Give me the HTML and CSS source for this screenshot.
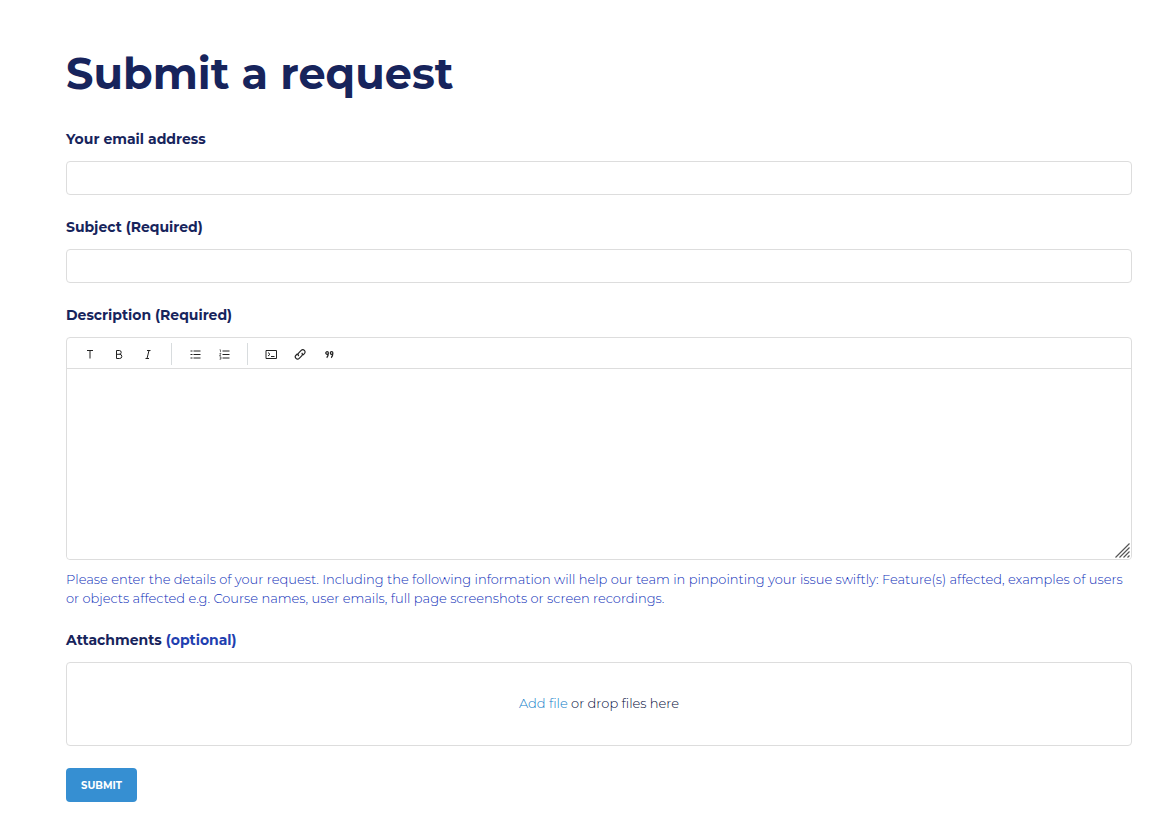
FILE: index.html
```
<!DOCTYPE html>
<html lang="en">
<head>
    <meta charset="UTF-8">
    <meta name="viewport" content="width=device-width, initial-scale=1.0">
    <title>Submit a request</title>
    <link rel="stylesheet" href="styles.css">
</head>
<body>
    <main class="container">
        <h1>Submit a request</h1>
        <form class="request-form">
            <div class="field">
                <label for="email">Your email address</label>
                <input class="text-input" type="email" id="email" name="email">
            </div>
            <div class="field">
                <label for="subject">Subject (Required)</label>
                <input class="text-input" type="text" id="subject" name="subject" required>
            </div>
            <div class="field">
                <label for="description">Description (Required)</label>
                <div class="editor">
                    <div class="toolbar">
                        <div class="tool-group">
                            <button type="button" aria-label="Text style">
                                <svg width="12" height="12" viewBox="0 0 12 12"><path d="M3 2.500h6M6 2.500v8"/></svg>
                            </button>
                            <button type="button" aria-label="Bold">
                                <svg width="12" height="12" viewBox="0 0 12 12"><path d="M3.500 2.500v8h3.200a2 2 0 0 0 0-4.200H3.500M3.500 2.500h2.800a1.900 1.900 0 0 1 0 3.800"/></svg>
                            </button>
                            <button type="button" aria-label="Italic">
                                <svg width="12" height="12" viewBox="0 0 12 12"><path d="M5 2.500h3.500M3.500 10.500H7M7 2.500l-2 8"/></svg>
                            </button>
                        </div>
                        <div class="tool-group">
                            <button type="button" aria-label="Bulleted list">
                                <svg width="12" height="12" viewBox="0 0 12 12"><path d="M4.500 3h7M4.500 6.500h7M4.500 10h7M1.500 3h2M1.500 6.500h2M1.500 10h2"/></svg>
                            </button>
                            <button type="button" aria-label="Numbered list">
                                <svg width="12" height="12" viewBox="0 0 12 12"><path d="M4.500 3h7M4.500 6.500h7M4.500 10h7"/><path class="thin" d="M1.500 1.800h1v2.400M1.500 5.500H3L1.500 7.500H3M1.500 8.800H3v2.400H1.500M2 10h1"/></svg>
                            </button>
                        </div>
                        <div class="tool-group">
                            <button type="button" aria-label="Code block">
                                <svg width="12" height="12" viewBox="0 0 12 12"><path d="M1 2.500h10.500v8H1zM3 4.500l2 1.800-2 1.700M6 8.500h3.500"/></svg>
                            </button>
                            <button type="button" aria-label="Link">
                                <svg width="12" height="12" viewBox="0 0 12 12"><path class="medium" d="M4.800 8a2.200 2.200 0 0 1 0-3.100l2.400-2.500a2.200 2.200 0 0 1 3.200 3.200L8.900 7M7.700 4.800a2.200 2.200 0 0 1 0 3.100l-2.500 2.500a2.200 2.200 0 0 1-3.200-3.200l1.500-1.400"/></svg>
                            </button>
                            <button type="button" aria-label="Quote">
                                <svg width="12" height="12" viewBox="0 0 12 12"><path class="medium" d="M5.400 5a1.300 1.300 0 1 1-2.600 0 1.300 1.300 0 0 1 2.600 0c0 2.200-.4 3.500-1.700 4.700M9.900 5a1.300 1.300 0 1 1-2.600 0 1.300 1.300 0 0 1 2.600 0c0 2.200-.4 3.500-1.700 4.700"/></svg>
                            </button>
                        </div>
                    </div>
                    <textarea id="description" name="description" required></textarea>
                    <svg class="grip" width="15" height="15" viewBox="0 0 15 15" aria-hidden="true"><path d="M.5 14.500l14-14M4.500 14.500l10-10M8.500 14.500l6-6M12.500 14.500l2-2"/></svg>
                </div>
                <p class="hint">Please enter the details of your request. Including the following information will help our team in pinpointing your issue swiftly: Feature(s) affected, examples of users or objects affected e.g. Course names, user emails, full page screenshots or screen recordings.</p>
            </div>
            <div class="field">
                <label for="attachments">Attachments <span class="optional">(optional)</span></label>
                <div class="dropzone">
                    <input class="file-input" type="file" id="attachments" name="attachments" multiple>
                    <p><label class="add-file" for="attachments">Add file</label> or drop files here</p>
                </div>
            </div>
            <button class="submit" type="submit">SUBMIT</button>
        </form>
    </main>
</body>
</html>
```
FILE: styles.css
```
* {
    box-sizing: border-box;
    margin: 0;
    padding: 0;
}
body {
    font-family: Montserrat, Inter, sans-serif;
    font-size: 13px;
    font-weight: 300;
    color: #17245c;
    background-color: #fff;
}
.container {
    padding: 50px 38px 36px 66px;
}
h1 {
    margin-bottom: 29px;
    font-size: 43px;
    line-height: 48px;
    font-weight: 700;
}
.request-form {
    display: flex;
    flex-direction: column;
    gap: 20px;
}
.field {
    display: flex;
    flex-direction: column;
    gap: 10px;
}
.field > label {
    font-size: 14px;
    line-height: 24px;
    font-weight: 700;
}
.text-input {
    width: 100%;
    height: 34px;
    padding: 0 10px;
    border: 1px solid #ddd;
    border-radius: 4px;
    font: inherit;
    color: inherit;
}

/* description editor */
.editor {
    position: relative;
    border: 1px solid #ddd;
    border-radius: 4px;
}
.toolbar {
    display: flex;
    align-items: center;
    height: 31px;
    padding: 2px 9px 0;
    border-bottom: 1px solid #ddd;
}
.tool-group {
    display: flex;
    gap: 1px;
}
.tool-group + .tool-group {
    margin-left: 9px;
    padding-left: 9px;
    border-left: 1px solid #d8dcde;
}
.tool-group button {
    display: flex;
    align-items: center;
    justify-content: center;
    width: 28px;
    height: 22px;
    border: none;
    background: none;
}
.tool-group svg {
    fill: none;
    stroke: #222;
    stroke-width: 1;
}
.tool-group .thin {
    stroke-width: 0.6;
}
.tool-group .medium {
    stroke-width: 1.2;
}
textarea {
    display: block;
    width: 100%;
    height: 190px;
    padding: 10px;
    border: none;
    border-radius: 4px;
    resize: none;
    font: inherit;
    color: inherit;
}
.grip {
    position: absolute;
    right: 1px;
    bottom: 1px;
    fill: none;
    stroke: #555;
    stroke-width: 1.2;
    pointer-events: none;
}
.hint {
    line-height: 19px;
    color: #0f2fb8;
}
.optional {
    color: #1f40b0;
}

/* attachments */
.dropzone {
    position: relative;
    display: flex;
    align-items: center;
    justify-content: center;
    height: 84px;
    padding-bottom: 2px;
    border: 1px solid #ddd;
    border-radius: 4px;
    line-height: 19px;
    color: #040c3a;
}
.file-input {
    position: absolute;
    width: 100%;
    height: 100%;
    opacity: 0;
}
.add-file {
    color: #0f7cc8;
}
.submit {
    align-self: flex-start;
    margin-top: 2px;
    height: 34px;
    padding: 0 15px;
    border: none;
    border-radius: 4px;
    background-color: #368fd2;
    color: #fff;
    font-family: inherit;
    font-size: 10px;
    font-weight: 700;
}
```
